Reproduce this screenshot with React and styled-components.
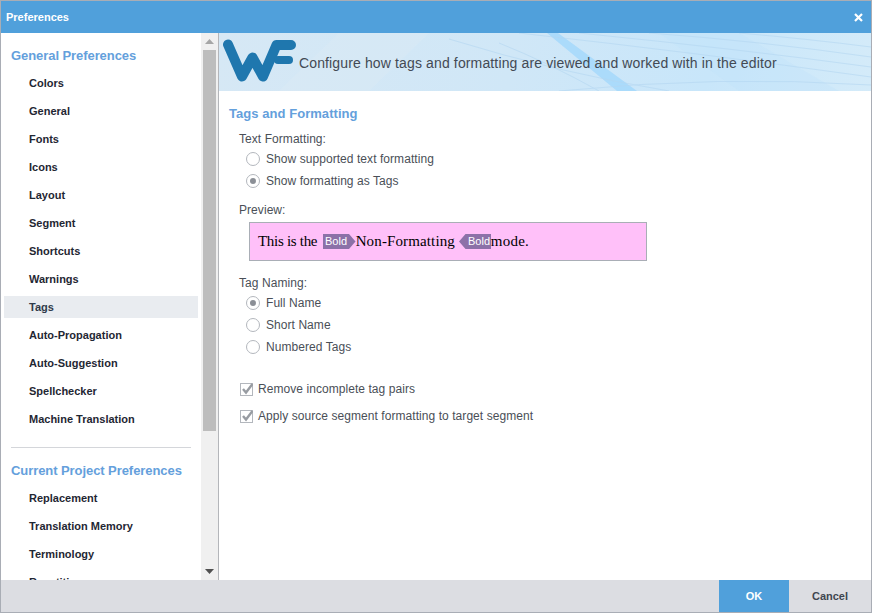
import React from "react";
import styled, { createGlobalStyle } from "styled-components";

const GlobalStyle = createGlobalStyle`
  html, body {
    margin: 0;
    padding: 0;
    background: #ffffff;
  }
  * {
    box-sizing: border-box;
  }
`;

const Dialog = styled.div`
  width: 872px;
  height: 613px;
  display: flex;
  flex-direction: column;
  border: 1px solid #a9adb5;
  font-family: "Liberation Sans", Arial, sans-serif;
  overflow: hidden;
`;

const TitleBar = styled.div`
  height: 32px;
  flex: none;
  display: flex;
  align-items: center;
  justify-content: space-between;
  padding: 0 8px 0 5px;
  background: #50a0db;
  color: #ffffff;
  font-size: 11px;
  font-weight: 700;
`;

const CloseIcon = styled.svg`
  width: 9px;
  height: 9px;
  display: block;
`;

const Body = styled.div`
  flex: 1;
  min-height: 0;
  display: flex;
`;

const Sidebar = styled.div`
  width: 218px;
  flex: none;
  display: flex;
  border-right: 1px solid #b4b6ba;
`;

const SideScroll = styled.div`
  flex: 1;
  min-width: 0;
  overflow: hidden;
  padding: 15px 3px 0 3px;
`;

const GroupTitle = styled.div`
  font-size: 13px;
  font-weight: 700;
  line-height: 16px;
  letter-spacing: -0.07px;
  color: #64a0dc;
  padding-left: 7px;
  margin-bottom: 8px;
`;

const NavItem = styled.div`
  height: 22px;
  margin-bottom: 6px;
  display: flex;
  align-items: center;
  padding-left: 25px;
  font-size: 11px;
  font-weight: 700;
  color: ${(props) => (props.$active ? "#2f3a4a" : "#1f2733")};
  background: ${(props) => (props.$active ? "#e9ecf0" : "transparent")};
`;

const Divider = styled.div`
  height: 1px;
  margin: 17px 7px 15px;
  background: #d4d6da;
`;

const Scrollbar = styled.div`
  width: 17px;
  flex: none;
  display: flex;
  flex-direction: column;
  align-items: center;
  background: #f0f0f0;
`;

const ScrollArrow = styled.div`
  height: 17px;
  flex: none;
  display: flex;
  align-items: center;
  justify-content: center;
`;

const ScrollThumb = styled.div`
  width: 13px;
  height: 381px;
  flex: none;
  background: #bdbdbd;
`;

const ScrollGap = styled.div`
  flex: 1;
`;

const Main = styled.div`
  flex: 1;
  min-width: 0;
  display: flex;
  flex-direction: column;
`;

const Banner = styled.div`
  height: 58px;
  flex: none;
  position: relative;
  display: flex;
  align-items: center;
  padding: 0 0 0 4px;
  background: linear-gradient(100deg, #d6e8f5 0%, #d0e7f7 45%, #c8e6fa 75%, #d4ebf9 100%);
  overflow: hidden;
`;

const BannerLines = styled.svg`
  position: absolute;
  left: 0;
  top: 0;
  width: 652px;
  height: 58px;
`;

const Logo = styled.svg`
  position: relative;
  width: 74px;
  height: 46px;
  flex: none;
  margin-top: -2px;
`;

const BannerText = styled.div`
  position: relative;
  margin: 1px 0 0 2px;
  font-size: 14px;
  letter-spacing: 0.135px;
  color: #434a54;
  white-space: nowrap;
`;

const Content = styled.div`
  flex: 1;
  min-height: 0;
  padding: 15px 10px 0;
  color: #4a4f57;
  font-size: 12px;
  letter-spacing: 0.06px;
`;

const SectionTitle = styled.div`
  font-size: 13px;
  font-weight: 700;
  line-height: 16px;
  letter-spacing: 0.05px;
  color: #64a0dc;
  margin-bottom: 10px;
`;

const Group = styled.div`
  padding-left: 10px;
  margin-top: ${(props) => props.$top || 0}px;
  margin-bottom: ${(props) => props.$gap || 0}px;
`;

const FieldLabel = styled.div`
  line-height: 14px;
  height: 14px;
  margin-bottom: ${(props) => props.$gap || 0}px;
`;

const Option = styled.div`
  height: 22px;
  display: flex;
  align-items: center;
  gap: 6px;
  padding-left: 7px;
`;

const Radio = styled.span`
  width: 14px;
  height: 14px;
  flex: none;
  border-radius: 50%;
  border: 1px solid #b3b7bd;
  background: #ffffff;
  display: flex;
  align-items: center;
  justify-content: center;

  &::after {
    content: "";
    width: 6px;
    height: 6px;
    border-radius: 50%;
    background: ${(props) => (props.$checked ? "#8b8f96" : "transparent")};
  }
`;

const PreviewBox = styled.div`
  width: 398px;
  height: 39px;
  margin-left: 20px;
  display: flex;
  align-items: center;
  padding: 0 0 0 8px;
  border: 1px solid #a9aeb6;
  background: #ffc0f9;
  color: #000000;
  font-family: "Liberation Serif", "Times New Roman", serif;
  font-size: 15px;
  letter-spacing: 0;
  white-space: pre;
`;

const PreviewText = styled.span`
  letter-spacing: ${(props) => props.$spacing}px;
  margin-right: ${(props) => props.$after || 0}px;
`;

const Tag = styled.svg`
  width: ${(props) => props.width}px;
  height: 15px;
  flex: none;
  margin-top: -1px;
`;

const TagLabel = styled.text`
  font-family: "Liberation Sans", Arial, sans-serif;
  font-size: 11px;
  fill: #ffffff;
`;

const CheckRow = styled.div`
  height: 27px;
  display: flex;
  align-items: center;
  gap: 5px;
  padding-left: 1px;
  margin-left: -1px;
`;

const CheckBox = styled.svg`
  width: 14px;
  height: 14px;
  flex: none;
`;

const Footer = styled.div`
  height: 32px;
  flex: none;
  display: flex;
  justify-content: flex-end;
  background: #dcdde2;
`;

const FooterButton = styled.div`
  width: ${(props) => (props.$primary ? 70 : 82)}px;
  display: flex;
  align-items: center;
  justify-content: center;
  font-size: 11px;
  font-weight: 700;
  color: ${(props) => (props.$primary ? "#ffffff" : "#3f4650")};
  background: ${(props) => (props.$primary ? "#50a0db" : "transparent")};
`;

const generalItems = [
  "Colors",
  "General",
  "Fonts",
  "Icons",
  "Layout",
  "Segment",
  "Shortcuts",
  "Warnings",
  "Tags",
  "Auto-Propagation",
  "Auto-Suggestion",
  "Spellchecker",
  "Machine Translation",
];

const projectItems = ["Replacement", "Translation Memory", "Terminology", "Repetitions"];

const Check = () => (
  <CheckBox viewBox="0 0 14 14">
    <rect x="1.5" y="1.5" width="12" height="12" fill="#ffffff" stroke="#b3b7bd" />
    <path d="M4 7 L7 10.5 L13.5 2" fill="none" stroke="#989ca2" strokeWidth="2.4" />
  </CheckBox>
);

const App = () => {
  return (
    <>
      <GlobalStyle />
      <Dialog>
        <TitleBar>
          <span>Preferences</span>
          <CloseIcon viewBox="0 0 9 9">
            <path d="M1 1 L8 8 M8 1 L1 8" stroke="#ffffff" strokeWidth="2.2" />
          </CloseIcon>
        </TitleBar>
        <Body>
          <Sidebar>
            <SideScroll>
              <GroupTitle>General Preferences</GroupTitle>
              {generalItems.map((item) => (
                <NavItem key={item} $active={item === "Tags"}>
                  {item}
                </NavItem>
              ))}
              <Divider />
              <GroupTitle>Current Project Preferences</GroupTitle>
              {projectItems.map((item) => (
                <NavItem key={item}>{item}</NavItem>
              ))}
            </SideScroll>
            <Scrollbar>
              <ScrollArrow>
                <svg width="9" height="5" viewBox="0 0 9 5">
                  <path d="M4.5 0 L9 5 L0 5 Z" fill="#a6a6a6" />
                </svg>
              </ScrollArrow>
              <ScrollThumb />
              <ScrollGap />
              <ScrollArrow>
                <svg width="9" height="5" viewBox="0 0 9 5">
                  <path d="M0 0 L9 0 L4.5 5 Z" fill="#505050" />
                </svg>
              </ScrollArrow>
            </Scrollbar>
          </Sidebar>
          <Main>
            <Banner>
              <BannerLines viewBox="0 0 652 58" preserveAspectRatio="none">
                <path d="M328 0 L339 0 L418 58 L398 58 Z" fill="#a5d8fb" opacity="0.85" />
                <path d="M120 0 L210 0 L150 58 L60 58 Z" fill="#dcecf6" opacity="0.4" />
                <path d="M440 0 L520 0 L620 58 L520 58 Z" fill="#bfe2fa" opacity="0.35" />
                <g fill="none" stroke="#b4d7f2" strokeWidth="1" opacity="0.6">
                  <path d="M230 6 Q 340 40 450 58" />
                  <path d="M300 0 Q 480 20 652 44" />
                  <path d="M360 0 Q 520 16 652 34" />
                  <path d="M430 0 Q 540 8 652 24" />
                  <path d="M520 0 Q 590 6 652 14" />
                  <path d="M340 58 Q 500 42 652 52" />
                  <path d="M280 10 Q 330 30 380 58" />
                </g>
              </BannerLines>
              <Logo viewBox="0 0 74 46">
                <path
                  d="M5 6.5 L19 38.5 L29.5 19.5 L40 38.5 L53.5 7 L68 7"
                  fill="none"
                  stroke="#1f77ae"
                  strokeWidth="10"
                  strokeLinecap="round"
                  strokeLinejoin="round"
                />
                <path d="M55 22 L66 22" fill="none" stroke="#1f77ae" strokeWidth="8" strokeLinecap="round" />
              </Logo>
              <BannerText>Configure how tags and formatting are viewed and worked with in the editor</BannerText>
            </Banner>
            <Content>
              <SectionTitle>Tags and Formatting</SectionTitle>
              <Group $gap={11}>
                <FieldLabel $gap={2}>Text Formatting:</FieldLabel>
                <Option>
                  <Radio />
                  Show supported text formatting
                </Option>
                <Option>
                  <Radio $checked />
                  Show formatting as Tags
                </Option>
              </Group>
              <Group $gap={5}>
                <FieldLabel>Preview:</FieldLabel>
              </Group>
              <PreviewBox>
                <PreviewText $spacing={-0.3} $after={2}>This is the </PreviewText>
                <Tag width={33} viewBox="0 0 33 15">
                  <path d="M0 0 H26 L32.5 7.5 L26 15 H0 Z" fill="#8c71a8" />
                  <TagLabel x="2" y="11">Bold</TagLabel>
                </Tag>
                <PreviewText $spacing={0.13}>Non-Formatting </PreviewText>
                <Tag width={32} viewBox="0 0 32 15">
                  <path d="M32 0 H6.5 L0 7.5 L6.5 15 H32 Z" fill="#8c71a8" />
                  <TagLabel x="9" y="11">Bold</TagLabel>
                </Tag>
                <PreviewText $spacing={0.2}>mode.</PreviewText>
              </PreviewBox>
              <Group $top={15} $gap={17}>
                <FieldLabel $gap={2}>Tag Naming:</FieldLabel>
                <Option>
                  <Radio $checked />
                  Full Name
                </Option>
                <Option>
                  <Radio />
                  Short Name
                </Option>
                <Option>
                  <Radio />
                  Numbered Tags
                </Option>
              </Group>
              <Group>
                <CheckRow>
                  <Check />
                  Remove incomplete tag pairs
                </CheckRow>
                <CheckRow>
                  <Check />
                  Apply source segment formatting to target segment
                </CheckRow>
              </Group>
            </Content>
          </Main>
        </Body>
        <Footer>
          <FooterButton $primary>OK</FooterButton>
          <FooterButton>Cancel</FooterButton>
        </Footer>
      </Dialog>
    </>
  );
};

export default App;
